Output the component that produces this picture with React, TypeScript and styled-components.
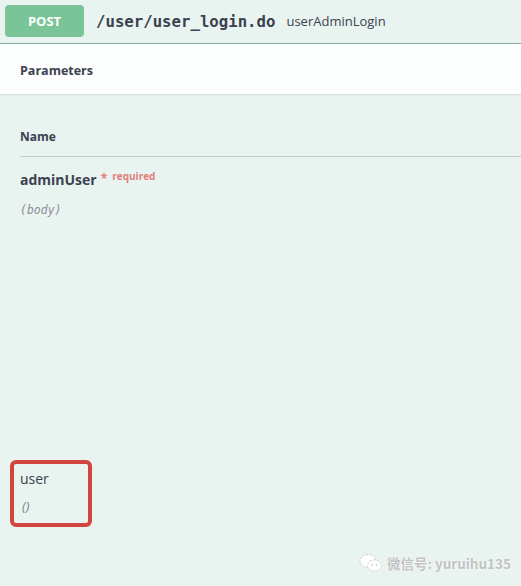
import React from "react";
import styled, { createGlobalStyle } from "styled-components";

const Global = createGlobalStyle`
  html, body { margin: 0; padding: 0; background: #e9f3f0; }
  body { font-family: "Open Sans", "Noto Sans", sans-serif; color: #3b4151; }
`;

const Page = styled.div`
  position: relative;
  width: 521px;
  height: 586px;
  background: #e9f3f0;
  overflow: hidden;
`;

const Summary = styled.div`
  display: flex;
  align-items: center;
  height: 44px;
  padding: 0 5px 1px;
  box-sizing: border-box;
  border-bottom: 1px solid #85ad9c;
`;

const MethodBadge = styled.div`
  width: 79px;
  height: 32px;
  border-radius: 4px;
  background: #79c597;
  color: #fff;
  font-weight: 700;
  font-size: 13px;
  display: flex;
  align-items: center;
  justify-content: center;
`;

const Path = styled.span`
  margin-left: 12px;
  font-family: "DejaVu Sans Mono", "Liberation Mono", monospace;
  font-weight: 700;
  font-size: 15.7px;
  color: #3b4151;
`;

const OpId = styled.span`
  margin-left: 11px;
  font-size: 13px;
  color: #3b4151;
`;

const SectionHeader = styled.div`
  height: 50px;
  display: flex;
  align-items: center;
  padding: 2px 0 0 20px;
  box-sizing: border-box;
  background: rgba(255, 255, 255, 0.85);
  box-shadow: 0 1px 2px rgba(0, 0, 0, 0.1);
`;

const SectionTitle = styled.h4`
  margin: 0;
  font-size: 12.5px;
  font-weight: 700;
  color: #3b4151;
`;

const Table = styled.div`
  padding-left: 20px;
`;

const ColHead = styled.div`
  margin-top: 29px;
  height: 34px;
  box-sizing: border-box;
  border-bottom: 1px solid #c3cbc8;
  font-size: 12px;
  font-weight: 700;
  display: flex;
  align-items: flex-start;
  padding-top: 5px;
`;

const ParamRow = styled.div`
  padding-top: 13px;
`;

const ParamName = styled.div`
  display: flex;
  align-items: flex-start;
  font-size: 14px;
  font-weight: 700;
  color: #3b4151;
  line-height: 20px;
`;

const Required = styled.span`
  margin-left: 4px;
  color: #e07f7a;
  font-size: 10px;
  font-weight: 700;
  line-height: 12px;
  display: flex;
  gap: 5px;
`;

const Star = styled.span`
  font-size: 12px;
  margin-top: 3px;
`;

const ParamIn = styled.div`
  margin-top: 13px;
  font-family: "DejaVu Sans Mono", "Liberation Mono", monospace;
  font-style: italic;
  font-size: 11.5px;
  color: #8b8f98;
`;

const Highlight = styled.div`
  margin: 243px 0 0 10px;
  width: 82px;
  height: 67px;
  box-sizing: border-box;
  border: 4px solid #d2453f;
  border-radius: 6px;
  padding: 5px 0 0 6px;
`;

const PlainName = styled.div`
  font-size: 14px;
  color: #3b4151;
  line-height: 20px;
`;

const Parens = styled.div`
  margin-top: 8px;
  margin-left: 2px;
  font-size: 13px;
  font-style: italic;
  color: #7a7f88;
`;

const Watermark = styled.div`
  position: absolute;
  right: 10px;
  bottom: 13px;
  display: flex;
  align-items: center;
  gap: 4px;
  color: #bfc3c2;
  font-size: 13.5px;
  font-weight: 700;
  font-family: "Noto Sans CJK SC", "Noto Sans", sans-serif;
  text-shadow: 0 0 1px #fff, 0 0 2px #fff;
`;

const WeChatIcon = () => (
  <svg width="24" height="20" viewBox="0 0 24 20">
    <ellipse cx="9" cy="8" rx="8" ry="6.5" fill="#fff" stroke="#c8cccb" strokeWidth="1" strokeDasharray="2 1.5" />
    <ellipse cx="15.5" cy="12.5" rx="7" ry="5.5" fill="#fff" stroke="#c8cccb" strokeWidth="1" strokeDasharray="2 1.5" />
    <circle cx="13" cy="12" r="0.9" fill="#c8cccb" />
    <circle cx="17.5" cy="12" r="0.9" fill="#c8cccb" />
  </svg>
);

export default function App() {
  return (
    <>
      <Global />
      <Page>
        <Summary>
          <MethodBadge>POST</MethodBadge>
          <Path>/user/user_login.do</Path>
          <OpId>userAdminLogin</OpId>
        </Summary>
        <SectionHeader>
          <SectionTitle>Parameters</SectionTitle>
        </SectionHeader>
        <Table>
          <ColHead>Name</ColHead>
          <ParamRow>
            <ParamName>
              adminUser
              <Required>
                <Star>*</Star>
                required
              </Required>
            </ParamName>
            <ParamIn>(body)</ParamIn>
          </ParamRow>
        </Table>
        <Highlight>
          <PlainName>user</PlainName>
          <Parens>()</Parens>
        </Highlight>
        <Watermark>
          <WeChatIcon />
          微信号: yuruihu135
        </Watermark>
      </Page>
    </>
  );
}
